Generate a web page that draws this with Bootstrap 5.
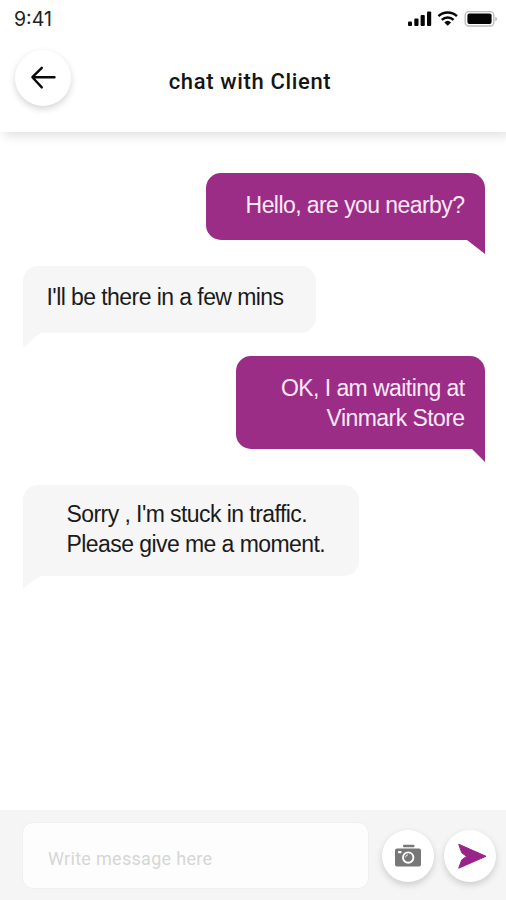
<!DOCTYPE html>
<html lang="en">
<head>
<meta charset="utf-8">
<meta name="viewport" content="width=device-width, initial-scale=1">
<title>chat with Client</title>
<link href="https://cdn.jsdelivr.net/npm/bootstrap@5.3.0/dist/css/bootstrap.min.css" rel="stylesheet">
<style>
  body { font-family: "Liberation Sans", Arial, sans-serif; color: #1b1b1b; }
  .phone { height: 900px; width: 506px; }
  .top-area { height: 132px; box-shadow: 4px 4px 10px rgba(0,0,0,.12); }
  .status-bar { height: 38px; padding: 0 7px 0 14px; }
  .clock { font: 400 19.5px/38px Inter, sans-serif; letter-spacing: 0; color: #222; }
  .title-row { display: grid; grid-template-columns: 56px 1fr 56px; padding: 12px 21px 0 15px; }
  .chat-title { font: 500 22px/30px Roboto, sans-serif; letter-spacing: .65px; color: #151515; padding-top: 8px; white-space: nowrap; }
  .round-btn { border: 0; border-radius: 50%; background: #fff; padding: 0; box-shadow: 0 3px 7px rgba(0,0,0,.17); flex: none; }
  .back-btn { width: 56px; height: 56px; }
  .tool-btn { width: 52px; height: 52px; }
  .thread { padding: 40.5px 21px 0 22.5px; }
  .bubble { position: relative; border-radius: 15px; font-size: 23px; line-height: 30px; letter-spacing: -.57px; white-space: nowrap; }
  .bubble::after { content: ""; position: absolute; top: 100%; width: var(--tail-w); height: var(--tail-h); background: inherit; }
  .sent { background: #9b2d87; color: #fbe9f8; text-align: right; border-bottom-right-radius: 0; padding-right: 20.5px; }
  .sent::after { right: 0; clip-path: polygon(0 0, 100% 0, 100% 100%); }
  .received { background: #f6f6f6; border-bottom-left-radius: 0; }
  .received::after { left: 0; clip-path: polygon(0 0, 100% 0, 0 100%); }
  .hello { width: 279px; height: 67.5px; padding-top: 17px; --tail-w: 18px; --tail-h: 14px; }
  .mins { width: 293.5px; height: 67px; padding: 15.5px 0 0 24px; margin-top: 26px; --tail-w: 18px; --tail-h: 15px; }
  .waiting { width: 249px; height: 93px; padding-top: 17px; margin-top: 23px; --tail-w: 13px; --tail-h: 13px; }
  .traffic { width: 336.5px; height: 91px; padding: 14px 0 0 44px; margin-top: 36px; --tail-w: 18px; --tail-h: 13px; }
  .composer { height: 90px; background: #f5f5f5; padding: 12px 10px 0 22px; }
  .message-box { width: 347px; height: 67px; border: 1px solid #f0f0f0; border-radius: 11px; background: #fdfdfd; padding: 5px 25px 0; font: 400 18px/24px Roboto, sans-serif; letter-spacing: .3px; }
  .message-box::placeholder { color: #d6d6d6; opacity: 1; }
  .message-box:focus { outline: none; }
  .tools { gap: 10px; padding-top: 8px; }
</style>
</head>
<body class="bg-white">
<div class="phone d-flex flex-column overflow-hidden">
  <header class="top-area bg-white flex-shrink-0">
    <div class="status-bar d-flex justify-content-between align-items-center">
      <span class="clock">9:41</span>
      <svg width="92" height="20" viewBox="0 0 92 20" aria-hidden="true">
        <g fill="#080808">
          <rect x="1" y="12.5" width="4" height="4.5" rx="1"/>
          <rect x="7.3" y="9.5" width="4.2" height="7.5" rx="1"/>
          <rect x="13.6" y="6" width="4.2" height="11" rx="1"/>
          <rect x="20" y="2.6" width="4.2" height="14.4" rx="1"/>
        </g>
        <g fill="none" stroke="#080808" stroke-width="2.5">
          <path d="M31.5 7.2a13.4 13.4 0 0 1 18.4 0"/>
          <path d="M34.8 10.9a8.7 8.7 0 0 1 11.8 0"/>
        </g>
        <path d="M37.3 13.4a5 5 0 0 1 6.8 0l-3.4 3.4z" fill="#080808"/>
        <rect x="58.2" y="2.6" width="28.6" height="14.4" rx="3.6" fill="#fff" stroke="#bdbdbd" stroke-width="1.4"/>
        <rect x="60.4" y="4.6" width="24.2" height="10.4" rx="2" fill="#050505"/>
        <path d="M88.2 7.7q2 1 2 2.3t-2 2.3z" fill="#bdbdbd"/>
      </svg>
    </div>
    <div class="title-row">
      <button class="round-btn back-btn d-flex align-items-center justify-content-center" aria-label="Back">
        <svg width="28" height="26" viewBox="0 0 28 26" fill="none" stroke="#0b0b0b" stroke-width="2.4" stroke-linecap="round" stroke-linejoin="round"><path d="M25.5 12.2H3.5M12.8 2.8L3.4 12.2L12.8 22.4"/></svg>
      </button>
      <h1 class="chat-title text-center align-self-center m-0">chat with Client</h1>
    </div>
  </header>

  <main class="thread flex-grow-1 d-flex flex-column">
    <div class="bubble sent hello align-self-end">Hello, are you nearby?</div>
    <div class="bubble received mins align-self-start">I'll be there in a few mins</div>
    <div class="bubble sent waiting align-self-end">OK, I am waiting at<br>Vinmark Store</div>
    <div class="bubble received traffic align-self-start">Sorry , I'm stuck in traffic.<br>Please give me a moment.</div>
  </main>

  <footer class="composer d-flex align-items-start flex-shrink-0">
    <input class="message-box" type="text" placeholder="Write message here" aria-label="Write message here">
    <div class="tools d-flex ms-auto">
      <button class="round-btn tool-btn d-flex align-items-center justify-content-center" aria-label="Camera">
        <svg width="28" height="24" viewBox="0 0 28 24">
          <rect x="9" y="0.7" width="11.5" height="2.6" rx="1" fill="#777"/>
          <rect x="1" y="4.6" width="26" height="18" rx="2" fill="#777"/>
          <rect x="4" y="7" width="3.6" height="2.2" rx=".8" fill="#fff"/>
          <circle cx="14.2" cy="13.6" r="5.2" fill="none" stroke="#fff" stroke-width="1.9"/>
          <path d="M11.6 13.4a2.8 2.8 0 0 1 2.4-2.6" fill="none" stroke="#eee" stroke-width="1"/>
        </svg>
      </button>
      <button class="round-btn tool-btn d-flex align-items-center justify-content-center" aria-label="Send">
        <svg width="32" height="28" viewBox="0 0 32 28"><path d="M4.7 2.2L32 14.3L4.7 26.2L7.8 17.8L12.6 14.4L7.8 10.8z" fill="#98248a" stroke="#98248a" stroke-width="1" stroke-linejoin="round"/></svg>
      </button>
    </div>
  </footer>
</div>
<script src="https://cdn.jsdelivr.net/npm/bootstrap@5.3.0/dist/js/bootstrap.bundle.min.js"></script>
</body>
</html>
